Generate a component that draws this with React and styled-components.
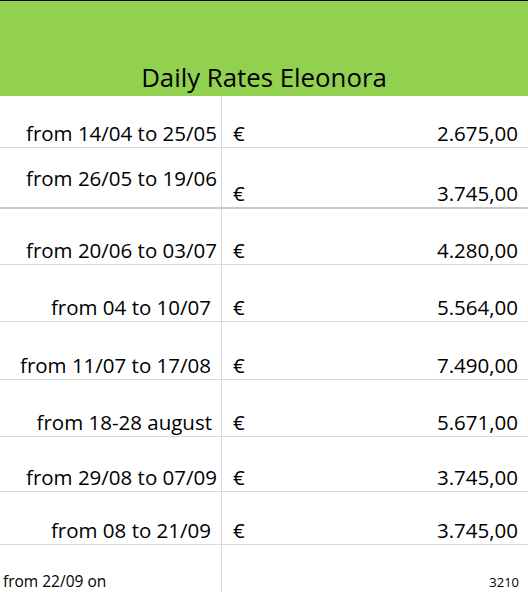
import React from "react";
import styled, { createGlobalStyle } from "styled-components";

const GlobalStyle = createGlobalStyle`
  html, body {
    margin: 0;
    padding: 0;
    background: #ffffff;
  }
  body {
    font-family: "Open Sans", "Liberation Sans", sans-serif;
    color: #000000;
  }
`;

const rates = [
    { label: "from 14/04 to 25/05", value: "2.675,00", height: 52 },
    { label: "from 26/05 to 19/06", value: "3.745,00", height: 61, lift: 15, thick: true },
    { label: "from 20/06 to 03/07", value: "4.280,00", height: 56 },
    { label: "from 04 to 10/07", value: "5.564,00", height: 57, trail: 6 },
    { label: "from 11/07 to 17/08", value: "7.490,00", height: 58, trail: 6 },
    { label: "from 18-28 august", value: "5.671,00", height: 57, trail: 5 },
    { label: "from 29/08 to 07/09", value: "3.745,00", height: 55 },
    { label: "from 08 to 21/09", value: "3.745,00", height: 53, trail: 6 },
];

const App = () => {
    return (
        <Sheet>
            <GlobalStyle />
            <Header>
                <Title>Daily Rates Eleonora</Title>
            </Header>
            {rates.map((r) => (
                <Row key={r.label} $height={r.height} $thick={r.thick}>
                    <Label $lift={r.lift} $trail={r.trail}>{r.label}</Label>
                    <Amount>
                        <span>€</span>
                        <span>{r.value}</span>
                    </Amount>
                </Row>
            ))}
            <LastRow>
                <SmallLabel>from 22/09 on</SmallLabel>
                <SmallAmount>3210</SmallAmount>
            </LastRow>
        </Sheet>
    );
};

const Sheet = styled.div`
width: 528px;
height: 592px;
overflow: hidden;
display: flex;
flex-direction: column;
`;
const Header = styled.div`
flex-shrink: 0;
border-top: 1px solid #000000;
background: #92d050;
display: flex;
align-items: flex-end;
justify-content: center;
padding-bottom: 4px;
height: 91px;
`;
const Title = styled.h1`
margin: 0;
font-size: 25.8px;
font-weight: 400;
line-height: 30px;
`;
const Row = styled.div`
height: ${(p) => p.$height}px;
flex-shrink: 0;
box-sizing: border-box;
display: grid;
grid-template-columns: 222px 1fr;
border-bottom: ${(p) => (p.$thick ? "2px solid #c8c8c8" : "1px solid #dadada")};
font-size: 20.5px;
line-height: 24px;
`;
const Label = styled.div`
border-right: 1px solid #dadada;
display: flex;
align-items: flex-end;
justify-content: flex-end;
padding: 0 ${(p) => 4 + (p.$trail || 0)}px ${(p) => 2 + (p.$lift || 0)}px 0;
white-space: nowrap;
`;
const Amount = styled.div`
display: flex;
align-items: flex-end;
justify-content: space-between;
padding: 0 10px 2px 11px;
`;
const LastRow = styled.div`
flex: 1;
min-height: 0;
display: grid;
grid-template-columns: 222px 1fr;
line-height: 20px;
`;
const SmallLabel = styled.div`
border-right: 1px solid #dadada;
display: flex;
align-items: flex-end;
padding: 0 0 1px 3px;
font-size: 15.5px;
white-space: nowrap;
`;
const SmallAmount = styled.div`
display: flex;
align-items: flex-end;
justify-content: flex-end;
padding: 0 9px 0 0;
font-size: 13px;
`;

export default App;
